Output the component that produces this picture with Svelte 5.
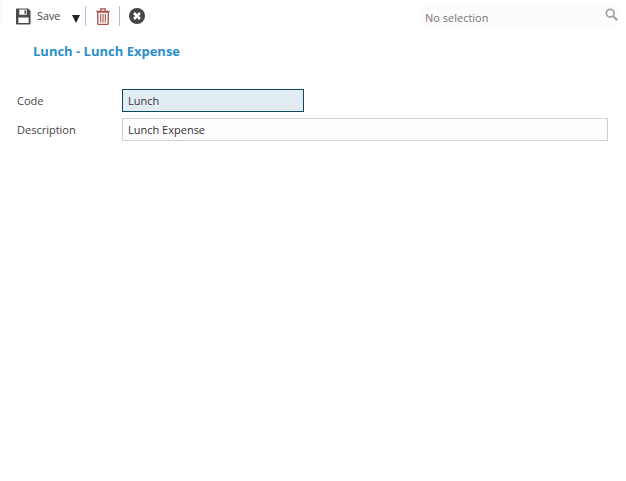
<script lang="ts">
  let code = 'Lunch';
  let description = 'Lunch Expense';
</script>

<main>
  <div class="toolbar">
    <button class="tool save">
      <svg width="15" height="17" viewBox="0 0 16 18">
        <path fill="#4a4a4a" fill-rule="evenodd" d="M1 0.500h12l2.500 2.500V16.500a1 1 0 0 1-1 1H1a1 1 0 0 1-1-1V1.500a1 1 0 0 1 1-1zM3.500 1.500v5.500h8V1.500zM9 2.500h1.700v3.500H9zM2.500 10v6h11V10z"/>
      </svg>
      <span>Save</span>
    </button>
    <span class="arrow"></span>
    <span class="sep"></span>
    <button class="tool trash">
      <svg width="14" height="17" viewBox="0 0 14 17" fill="none" stroke="#a94f4b">
        <path stroke-width="1.300" d="M1.800 4h10.400V15.500a1 1 0 0 1-1 1H2.800a1 1 0 0 1-1-1z"/>
        <path stroke-width="1.300" d="M0.300 3.300h13.400M4.800 3V0.800h4.400V3"/>
        <path stroke-width="1.100" d="M4.700 6v8.500M7 6v8.500M9.300 6v8.500"/>
      </svg>
    </button>
    <span class="sep second"></span>
    <button class="tool close">
      <svg width="16" height="16" viewBox="0 0 16 16">
        <circle cx="8" cy="8" r="8" fill="#454545"/>
        <path stroke="#fff" stroke-width="2.600" d="M5 5l6 6M11 5l-6 6"/>
      </svg>
    </button>
    <div class="search">
      <span>No selection</span>
      <svg width="13" height="13" viewBox="0 0 13 13" fill="none" stroke="#a3a3a3">
        <circle cx="5.200" cy="5.200" r="3.900" stroke-width="1.800"/>
        <path stroke-width="2.200" d="M8.200 8.200l4 4"/>
      </svg>
    </div>
  </div>

  <h1>Lunch - Lunch Expense</h1>

  <div class="form">
    <label for="code">Code</label>
    <input id="code" class="focused" type="text" bind:value={code} />
    <label for="description">Description</label>
    <input id="description" type="text" bind:value={description} />
  </div>
</main>

<style>
:global(body) {
  margin: 0;
  background: #fff;
}
main {
  font-family: "Open Sans", sans-serif;
  font-size: 11px;
  color: #333;
  height: 481px;
}
.toolbar {
  display: flex;
  align-items: center;
  height: 27px;
  padding: 5px 6px 0 14px;
  border-left: 2px solid #f8fafc;
  box-sizing: border-box;
}
.tool {
  display: flex;
  align-items: center;
  padding: 0;
  border: none;
  background: none;
  font: inherit;
  color: #444;
}
.save span {
  margin: 0 0 1px 6px;
  font-size: 10.800px;
}
.arrow {
  width: 0;
  height: 0;
  margin: 6px 0 0 12px;
  border-left: 4px solid transparent;
  border-right: 4px solid transparent;
  border-top: 8px solid #222;
}
.sep {
  width: 1px;
  height: 20px;
  margin: 0 10px 0 5px;
  background: #a9bfdc;
}
.sep.second {
  margin: 0 9px 0 9px;
}
.search {
  display: flex;
  align-items: center;
  justify-content: space-between;
  width: 200px;
  height: 22px;
  margin-left: auto;
  padding: 2px 2px 0 5px;
  box-sizing: border-box;
  background: #fcfcfc;
  color: #777;
  font-size: 11px;
}
.search svg {
  margin-bottom: 6px;
}
h1 {
  margin: 15px 0 0 33px;
  font-size: 13px;
  line-height: 18px;
  font-weight: 700;
  color: #2a8fc9;
}
.form {
  display: grid;
  grid-template-columns: 122px 486px;
  row-gap: 6px;
  margin-top: 29px;
  align-items: center;
}
label {
  padding-left: 17px;
  color: #444;
}
input {
  height: 23px;
  padding: 0 5px;
  box-sizing: border-box;
  border: 1px solid #d0d0d0;
  background: #fdfdfd;
  font: inherit;
  color: #333;
  outline: none;
}
input.focused {
  width: 182px;
  border-color: #12465c;
  background: #e2edf3;
}
</style>
